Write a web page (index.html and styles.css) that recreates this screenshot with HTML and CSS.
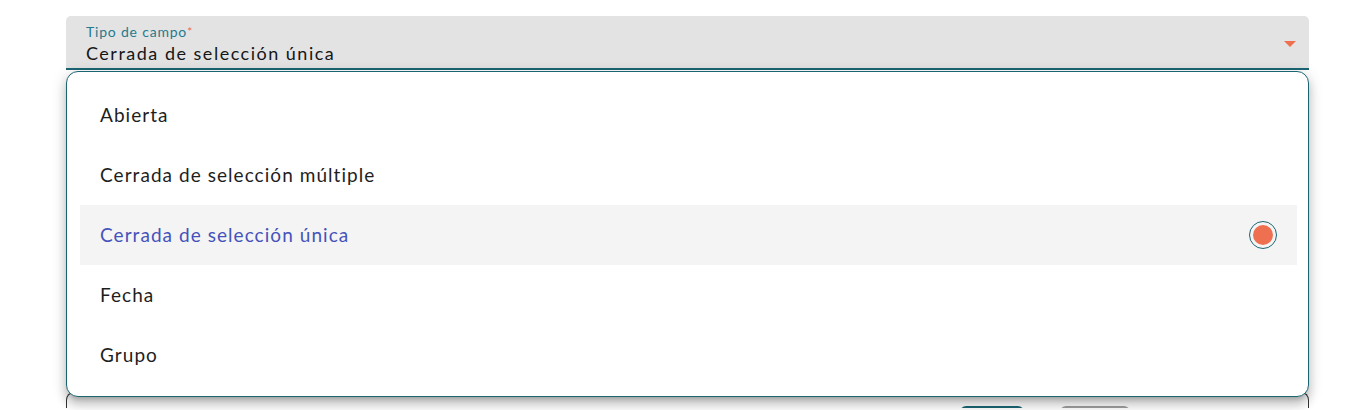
FILE: index.html
```html
<!DOCTYPE html>
<html lang="es">
<head>
    <meta charset="UTF-8">
    <title>Tipo de campo</title>
    <link rel="stylesheet" href="styles.css">
</head>
<body>
    <div class="page">
        <!-- Select field -->
        <div class="field">
            <label class="field-label">Tipo de campo<span class="required">*</span></label>
            <div class="field-value">Cerrada de selección única</div>
            <span class="field-arrow"></span>
        </div>

        <!-- Card behind the open panel -->
        <div class="card">
            <div class="card-actions">
                <button class="btn btn-primary" aria-label="Guardar"></button>
                <button class="btn btn-secondary" aria-label="Cancelar"></button>
            </div>
        </div>

        <!-- Open dropdown panel -->
        <div class="options-panel">
            <div class="option">Abierta</div>
            <div class="option">Cerrada de selección múltiple</div>
            <div class="option selected">
                Cerrada de selección única
                <span class="radio"><span class="radio-dot"></span></span>
            </div>
            <div class="option">Fecha</div>
            <div class="option">Grupo</div>
        </div>
    </div>
</body>
</html>
```

FILE: styles.css
```css
/* Reset */
* {
    margin: 0;
    padding: 0;
    box-sizing: border-box;
}

body {
    font-family: Lato, "Open Sans", sans-serif;
    background-color: #fff;
    overflow: hidden;
}

.page {
    position: relative;
    padding: 16px 58px 0 66px;
    height: 410px;
    overflow: hidden;
}

/* Select field */
.field {
    position: relative;
    height: 54px;
    background-color: #e3e3e3;
    border-radius: 5px 5px 0 0;
    border-bottom: 2px solid #1b6573;
    padding: 8px 20px 0 20px;
}

.field-label {
    display: block;
    font-size: 14px;
    line-height: 16px;
    color: #267a8e;
    letter-spacing: 0.8px;
}

.required {
    color: #f0684a;
    font-size: 12px;
    vertical-align: top;
    letter-spacing: 0;
}

.field-value {
    font-size: 18px;
    line-height: 26px;
    color: #161616;
    letter-spacing: 1.5px;
}

.field-arrow {
    position: absolute;
    right: 13px;
    top: 25px;
    width: 0;
    height: 0;
    border-left: 6px solid transparent;
    border-right: 6px solid transparent;
    border-top: 6px solid #f06f4f;
}

/* Card behind */
.card {
    margin-top: 322px;
    height: 16px;
    border: 1px solid #333;
    border-bottom: none;
    border-radius: 8px 8px 0 0;
    padding: 13px 178px 0 0;
    overflow: hidden;
}

.card-actions {
    display: flex;
    justify-content: flex-end;
    gap: 36px;
}

.btn {
    width: 64px;
    height: 34px;
    border: none;
    border-radius: 6px;
}

.btn-primary {
    background-color: #1b6573;
}

.btn-secondary {
    width: 70px;
    background-color: #9e9e9e;
}

/* Dropdown panel */
.options-panel {
    position: absolute;
    top: 71px;
    left: 66px;
    width: 1243px;
    height: 326px;
    background-color: #fff;
    border: 1px solid #1b6573;
    border-radius: 12px;
    padding: 13px 11px 13px 13px;
    box-shadow: 0 5px 5px -3px rgba(0, 0, 0, 0.2),
                0 8px 10px 1px rgba(0, 0, 0, 0.14),
                0 3px 14px 2px rgba(0, 0, 0, 0.12);
}

.option {
    display: flex;
    align-items: center;
    justify-content: space-between;
    height: 60px;
    padding: 0 20px 2px 20px;
    font-size: 19px;
    color: #1e1e1e;
    letter-spacing: 1.05px;
}

.option.selected {
    background-color: #f4f4f4;
    color: #4552bb;
}

.radio {
    display: flex;
    align-items: center;
    justify-content: center;
    width: 28px;
    height: 28px;
    margin-top: 2px;
    border: 1px solid #1b6573;
    border-radius: 50%;
}

.radio-dot {
    width: 20px;
    height: 20px;
    border-radius: 50%;
    background-color: #ef6f51;
}
```
